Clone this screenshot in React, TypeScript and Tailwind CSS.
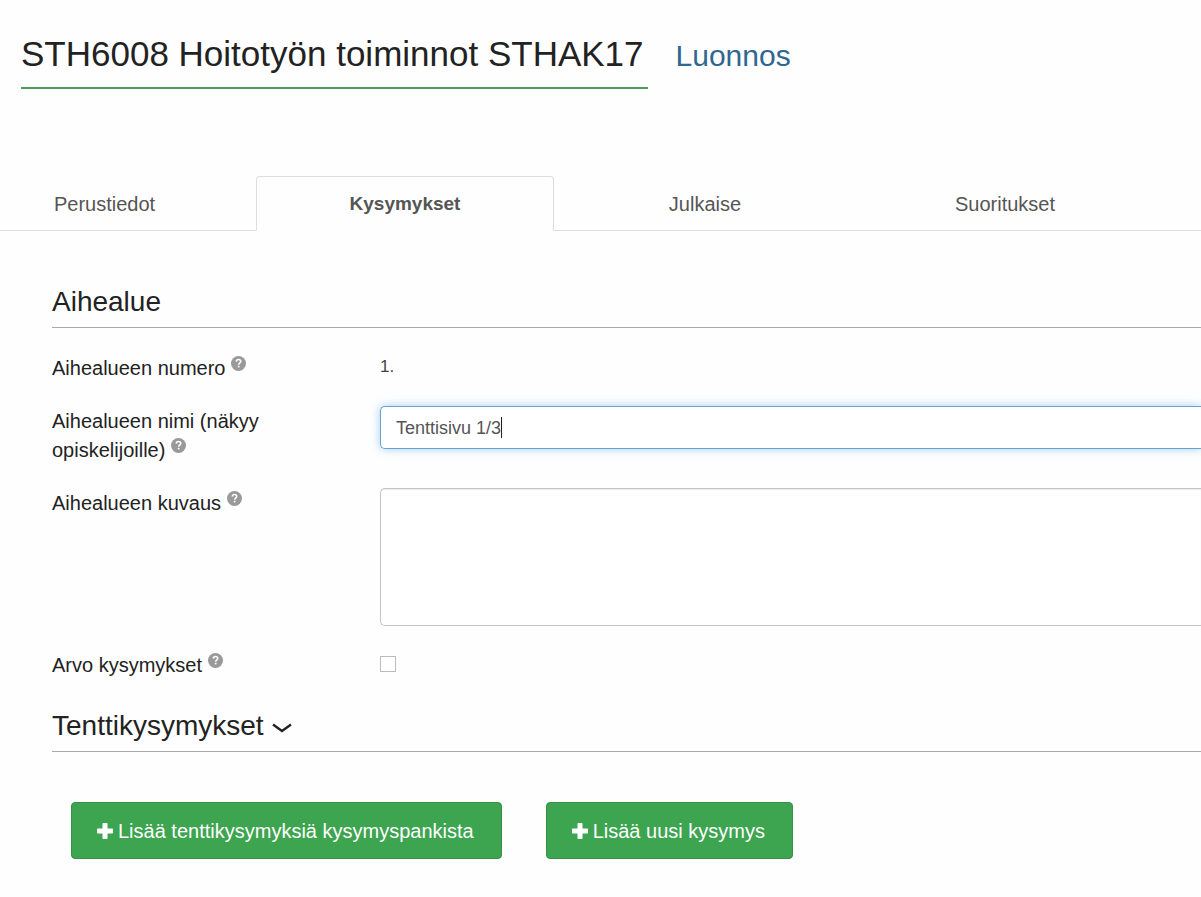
import { useState, type ReactNode } from "react";

const tabs = ["Perustiedot", "Kysymykset", "Julkaise", "Suoritukset"];

function HelpIcon() {
  return (
    <svg viewBox="0 0 15 15" className="inline-block w-[15px] h-[15px] align-[4px]" aria-hidden="true">
      <circle cx="7.5" cy="7.5" r="7.5" fill="#999999" />
      <path d="M5.3 5.6C5.4 4.100 6.300 3.500 7.500 3.500s2.200.7 2.200 1.900c0 1.500-2 1.600-2 3.300" fill="none" stroke="#fefefe" strokeWidth="1.6" />
      <path d="M6.800 9.800h1.700v1.600H6.800z" fill="#fefefe" />
    </svg>
  );
}

function PlusIcon() {
  return (
    <svg viewBox="0 0 16 16" className="w-4 h-4 shrink-0" fill="currentColor" aria-hidden="true">
      <path d="M6.2 0h3.6q.7 0 .7.7v4.8h4.8q.7 0 .7.7v3.6q0 .7-.7.7h-4.8v4.8q0 .7-.7.7H6.2q-.7 0-.7-.7v-4.8H.7q-.7 0-.7-.7V6.2q0-.7.7-.7h4.8V.7q0-.7.7-.7z" />
    </svg>
  );
}

function SectionTitle({ children }: { children: ReactNode }) {
  return (
    <h2 className="pb-[9px] border-b border-[#aaaaaa] text-[28px] leading-8 text-[#222222]">
      {children}
    </h2>
  );
}

interface FormRowProps {
  label: string;
  htmlFor: string;
  children: ReactNode;
}

function FormRow({ label, htmlFor, children }: FormRowProps) {
  return (
    <div className="flex items-start">
      <div className="w-[328px] pr-[88px] pt-px -mb-px shrink-0">
        <label htmlFor={htmlFor} className="text-[20px] leading-[29px] text-[#222222]">
          {label} <HelpIcon />
        </label>
      </div>
      <div className="flex-1 min-w-0">{children}</div>
    </div>
  );
}

function AddButton({ children }: { children: ReactNode }) {
  return (
    <button
      type="button"
      className="flex items-center gap-[5px] h-[57px] pl-[25px] pr-[27px] rounded border border-[#36914a] bg-[#3da44f] text-[20px] leading-7 text-white whitespace-nowrap"
    >
      <PlusIcon />
      {children}
    </button>
  );
}

export default function App() {
  const [activeTab, setActiveTab] = useState("Kysymykset");
  const [name, setName] = useState("Tenttisivu 1/3");
  const [description, setDescription] = useState("");
  const [shuffle, setShuffle] = useState(false);

  return (
    <div className="min-h-screen overflow-hidden bg-[#fefefe] font-['Liberation_Sans',Arial,sans-serif]">
      <header className="flex items-baseline gap-7 pt-[34px] pl-[21px]">
        <h1 className="pb-[13px] pr-1 border-b-2 border-[#4b9a5c] text-[35px] leading-10 text-[#222222]">
          STH6008 Hoitotyön toiminnot STHAK17
        </h1>
        <span className="text-[30px] leading-8 text-[#2f6791]">Luonnos</span>
      </header>

      <nav className="flex mt-[87px] border-b border-[#dddddd]" role="tablist">
        {tabs.map((tab, i) => (
          <button
            key={tab}
            type="button"
            role="tab"
            aria-selected={tab === activeTab}
            onClick={() => setActiveTab(tab)}
            className={`h-[55px] -mb-px shrink-0 border rounded-t leading-7 text-[#555555] ${
              i === 0 ? "w-[256px] pl-[53px] text-left" : "w-[298px] mr-[2px]"
            } ${
              tab === activeTab
                ? "border-[#dddddd] border-b-[#fefefe] bg-[#fefefe] font-bold text-[19px]"
                : "border-transparent text-[20px]"
            }`}
          >
            {tab}
          </button>
        ))}
      </nav>

      <main className="pt-[55px] pl-[52px] pb-10">
        <SectionTitle>Aihealue</SectionTitle>

        <form className="flex flex-col gap-6 pt-[25px] pb-[31px]">
          <FormRow label="Aihealueen numero" htmlFor="numero">
            <output id="numero" className="block text-[17px] leading-7 text-[#444444]">1.</output>
          </FormRow>

          <FormRow label="Aihealueen nimi (näkyy opiskelijoille)" htmlFor="nimi">
            <div className="relative">
              <input
                id="nimi"
                type="text"
                value={name}
                onChange={(e) => setName(e.target.value)}
                className="block w-full h-[43px] px-[15px] pt-[2px] rounded-l-[5px] border border-r-0 border-[#66a3d2] bg-white text-[18px] text-[#555555] caret-transparent outline-none shadow-[0_0_10px_rgba(102,175,233,0.6)]"
              />
              {/* text cursor */}
              <span className="absolute left-[121px] top-[11px] w-px h-[21px] bg-[#222222]" />
            </div>
          </FormRow>

          <FormRow label="Aihealueen kuvaus" htmlFor="kuvaus">
            <textarea
              id="kuvaus"
              value={description}
              onChange={(e) => setDescription(e.target.value)}
              className="block w-full h-[138px] px-[15px] py-2 resize-none rounded-l-[5px] border border-r-0 border-[#c4c4c4] bg-white text-[18px] text-[#555555] outline-none shadow-[inset_0_1px_1px_rgba(0,0,0,0.08)]"
            />
          </FormRow>

          <FormRow label="Arvo kysymykset" htmlFor="arvo">
            <input
              id="arvo"
              type="checkbox"
              checked={shuffle}
              onChange={(e) => setShuffle(e.target.checked)}
              className="block w-4 h-4 mt-[6px] appearance-none border border-[#bbbbbb] bg-white checked:bg-[#3da44f]"
            />
          </FormRow>
        </form>

        <SectionTitle>
          <span className="flex items-center gap-2">
            Tenttikysymykset
            <svg
              viewBox="0 0 20 10"
              className="w-5 h-[10px] mt-1"
              fill="none"
              stroke="currentColor"
              strokeWidth="2.4"
              aria-hidden="true"
            >
              <path d="M1 1.5L10 8L19 1.5" />
            </svg>
          </span>
        </SectionTitle>

        <div className="flex gap-11 pt-[50px] pl-[19px]">
          <AddButton>Lisää tenttikysymyksiä kysymyspankista</AddButton>
          <AddButton>Lisää uusi kysymys</AddButton>
        </div>
      </main>
    </div>
  );
}
